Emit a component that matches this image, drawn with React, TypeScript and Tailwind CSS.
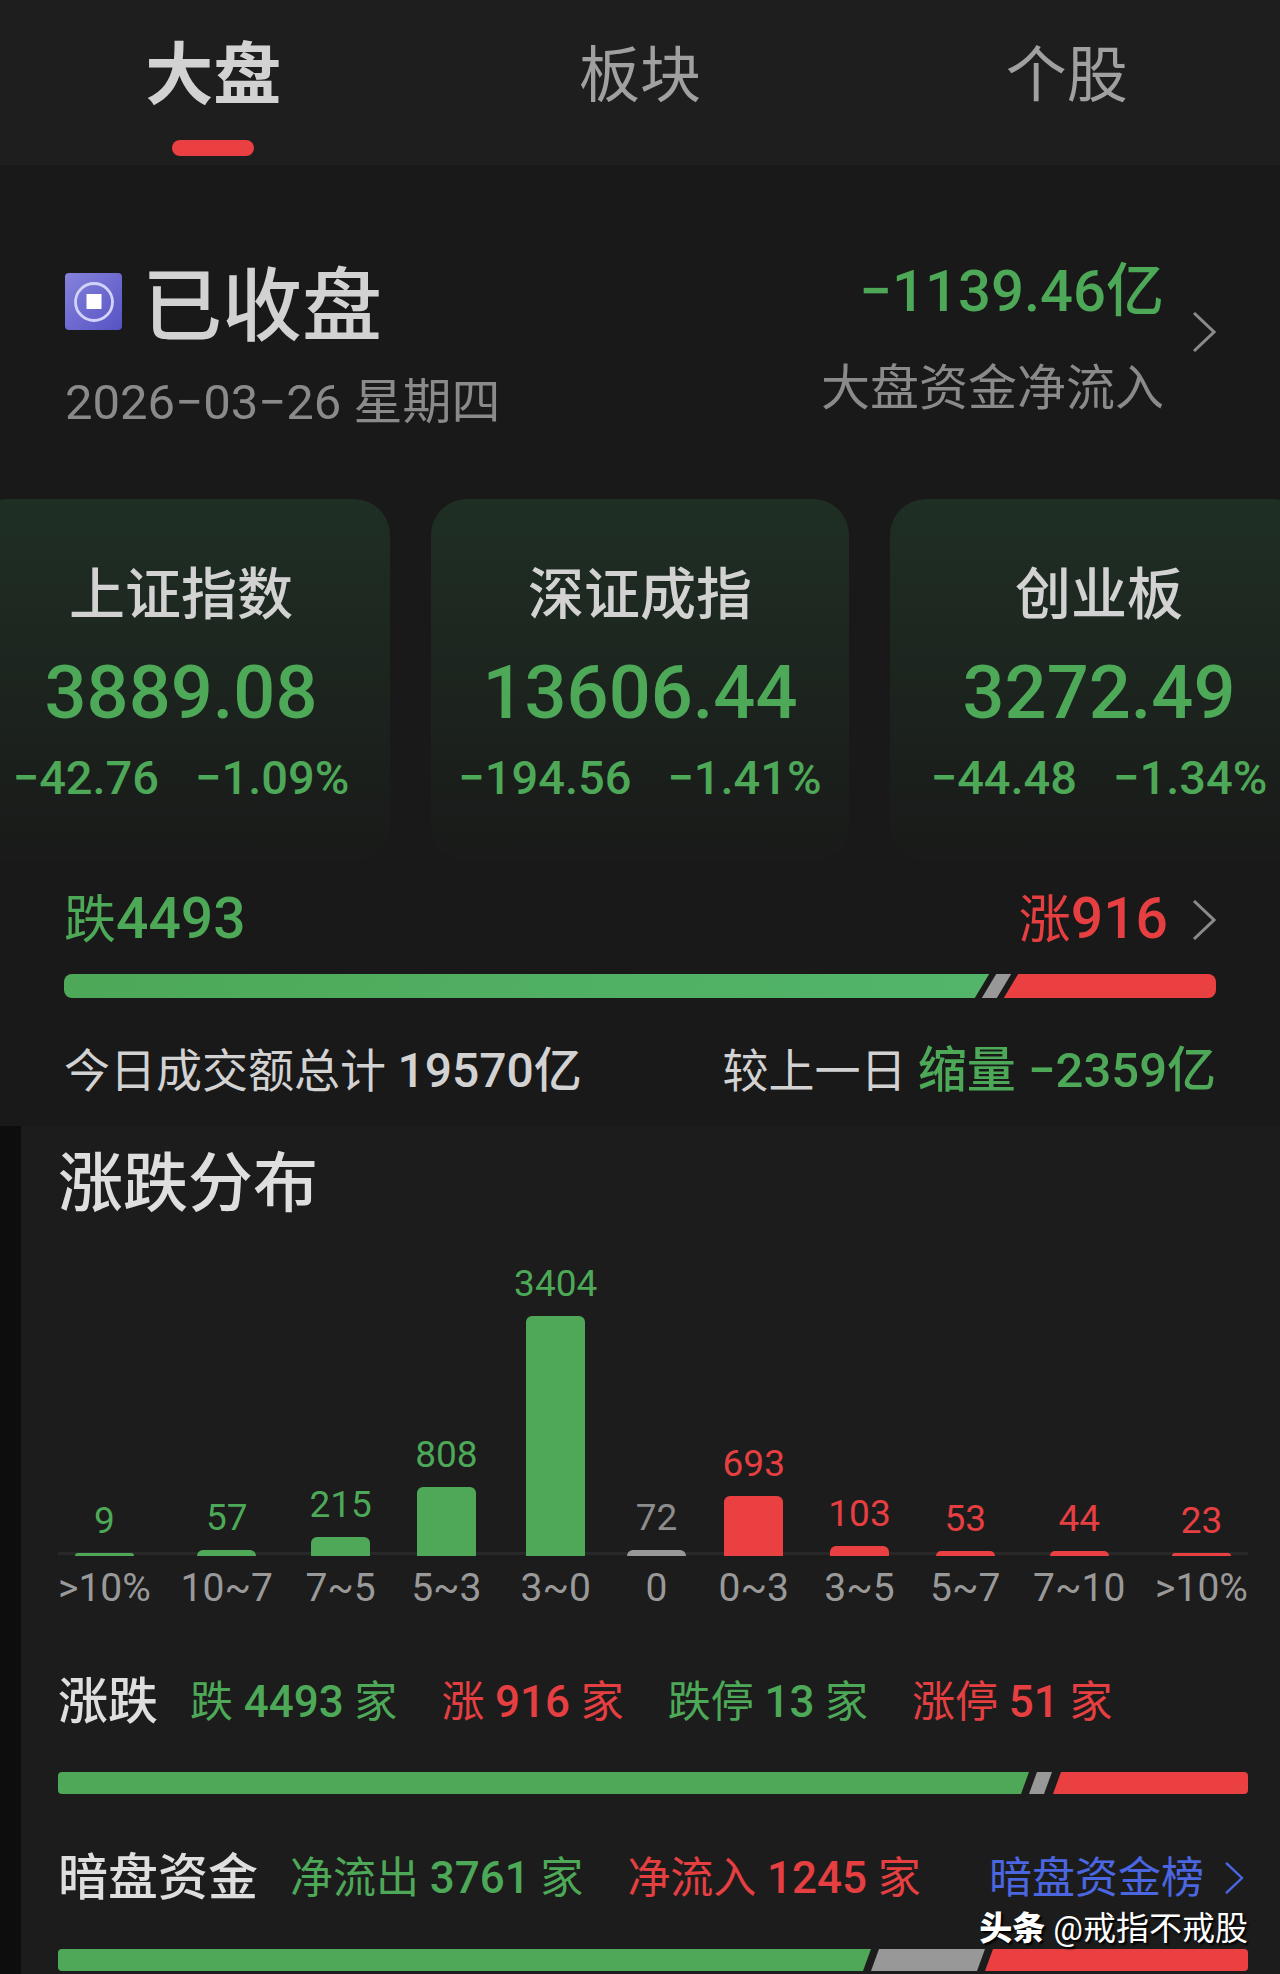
import { ReactNode } from 'react';

const GREEN = 'text-[#4da858]';
const RED = 'text-[#e63f41]';

const tabs = ['大盘', '板块', '个股'];

const indices = [
  { name: '上证指数', value: '3889.08', change: '−42.76', percent: '−1.09%' },
  { name: '深证成指', value: '13606.44', change: '−194.56', percent: '−1.41%' },
  { name: '创业板', value: '3272.49', change: '−44.48', percent: '−1.34%' },
];

const distribution = [
  { label: '>10%', count: 9, height: 3, tone: 'down' },
  { label: '10~7', count: 57, height: 6, tone: 'down' },
  { label: '7~5', count: 215, height: 19, tone: 'down' },
  { label: '5~3', count: 808, height: 69, tone: 'down' },
  { label: '3~0', count: 3404, height: 240, tone: 'down' },
  { label: '0', count: 72, height: 6, tone: 'flat' },
  { label: '0~3', count: 693, height: 60, tone: 'up' },
  { label: '3~5', count: 103, height: 10, tone: 'up' },
  { label: '5~7', count: 53, height: 5, tone: 'up' },
  { label: '7~10', count: 44, height: 5, tone: 'up' },
  { label: '>10%', count: 23, height: 3, tone: 'up' },
];

const textTone: Record<string, string> = {
  down: GREEN,
  flat: 'text-[#8c8c8c]',
  up: RED,
};

const barTone: Record<string, string> = {
  down: 'bg-[#4fa858]',
  flat: 'bg-[#989898]',
  up: 'bg-[#ea4041]',
};

function Chevron({ className }: { className: string }) {
  return (
    <svg viewBox="0 0 24 40" fill="none" stroke="currentColor" strokeWidth="3" className={className} aria-hidden="true">
      <path d="M2 1 L22 20 L2 39" />
    </svg>
  );
}

function CoinIcon() {
  return (
    <svg viewBox="0 0 57 57" className="mt-3.5 size-[57px] shrink-0" aria-hidden="true">
      <defs>
        <linearGradient id="coin" x1="0" y1="0" x2="1" y2="1">
          <stop offset="0" stopColor="#8583dc" />
          <stop offset="1" stopColor="#5752c4" />
        </linearGradient>
      </defs>
      <rect width="57" height="57" rx="4" fill="url(#coin)" />
      <circle cx="29" cy="29" r="18.5" fill="none" stroke="#d3d3fa" strokeWidth="2.8" />
      <rect x="21.5" y="21" width="15" height="15" fill="#fff" />
    </svg>
  );
}

// 跌 / 平 / 涨 比例条
function RatioBar({ down, flat, size }: { down: number; flat: number; size: 'lg' | 'md' }) {
  const lg = size === 'lg';
  const skew = lg ? '-skew-x-[31deg]' : '-skew-x-[20deg]';
  return (
    <div className={'flex overflow-hidden ' + (lg ? 'h-6 gap-[7px] rounded-lg' : 'h-[22px] gap-2 rounded-sm')}>
      <div style={{ width: `${down}%` }}>
        <div className={`h-full -ml-4 ${skew} ` + (lg ? 'bg-linear-to-r from-[#4da858] to-[#52b56a]' : 'bg-[#4fa858]')} />
      </div>
      <div className={`bg-[#989898] ${skew}`} style={{ width: `${flat}%` }} />
      <div className={`flex-1 -mr-4 bg-[#ea4041] ${skew}`} />
    </div>
  );
}

function Stat({ label, value, tone }: { label: string; value: string; tone: string }) {
  return (
    <span className={`text-[43px] ${tone}`}>
      {label} <span className="text-[44px] font-medium">{value}</span> 家
    </span>
  );
}

function StatRow({ title, children }: { title: string; children: ReactNode }) {
  return (
    <div className="flex items-center leading-[64px] whitespace-nowrap">
      <h3 className="mr-8 text-[50px] font-medium text-[#dedede]">{title}</h3>
      {children}
    </div>
  );
}

export default function App() {
  return (
    <div className="min-h-screen overflow-hidden bg-[#191919] font-[Roboto,'Noto_Sans_CJK_SC',sans-serif] text-[#d2d2d2]">
      <nav className="grid grid-cols-3 bg-[#1e1e1e] pt-9 pb-[9px]">
        {tabs.map((tab, i) => (
          <button key={tab} type="button" className="flex flex-col items-center">
            <span className={'leading-[80px] ' + (i === 0 ? 'text-[68px] font-bold' : 'text-[61px] text-[#a0a0a0]')}>
              {tab}
            </span>
            <span className={'mt-6 h-4 w-[82px] rounded-full ' + (i === 0 ? 'bg-[#ea4041]' : '')} />
          </button>
        ))}
      </nav>

      <section className="pb-[23px]">
        <div className="flex justify-between pt-[94px] pr-16 pl-[65px] whitespace-nowrap">
          <div>
            <div className="flex items-start gap-5">
              <CoinIcon />
              <h1 className="text-[80px] leading-24 font-medium">已收盘</h1>
            </div>
            <p className="mt-5 text-[49px] leading-14 text-[#8a8a8a]">2026−03−26 星期四</p>
          </div>
          <a href="#flow" className="flex items-start gap-7">
            <div className="text-right">
              <p className={`text-[58px] leading-16 font-medium ${GREEN}`}>−1139.46亿</p>
              <p className="mt-[38px] text-[49px] leading-14 text-[#8a8a8a]">大盘资金净流入</p>
            </div>
            <Chevron className="mt-[53px] h-10 w-6 text-[#8a8a8a]" />
          </a>
        </div>

        {/* 指数卡片 */}
        <div className="mt-[68px] flex justify-center gap-[41px] whitespace-nowrap">
          {indices.map((item) => (
            <div
              key={item.name}
              className="w-[418px] shrink-0 rounded-[36px] bg-linear-to-b from-[#1f2f24] to-[#191a19] pt-16 pb-[53px] text-center"
            >
              <h2 className="text-[56px] leading-16 font-medium">{item.name}</h2>
              <p className={`mt-5 text-[74px] leading-[92px] font-medium ${GREEN}`}>{item.value}</p>
              <p className={`mt-[9px] flex justify-center gap-9 text-[47px] leading-[60px] font-medium ${GREEN}`}>
                <span>{item.change}</span>
                <span>{item.percent}</span>
              </p>
            </div>
          ))}
        </div>

        <div className="mt-[26px] px-16">
          <div className="flex items-center justify-between leading-16 whitespace-nowrap">
            <p className={`text-[52px] ${GREEN}`}>
              跌<span className="text-[57px] font-medium">4493</span>
            </p>
            <a href="#rank" className="flex items-center gap-6">
              <span className={`text-[52px] ${RED}`}>
                涨<span className="text-[57px] font-medium">916</span>
              </span>
              <Chevron className="h-10 w-6 text-[#8a8a8a]" />
            </a>
          </div>
          <div className="mt-[21px]">
            <RatioBar down={79.7} flat={1.3} size="lg" />
          </div>
          <div className="mt-[41px] flex items-baseline justify-between text-[46px] leading-16 whitespace-nowrap">
            <p>
              今日成交额总计 <span className="text-[48px] font-medium">19570亿</span>
            </p>
            <p>
              较上一日 <span className={`text-[49px] font-medium ${GREEN}`}>缩量 −2359亿</span>
            </p>
          </div>
        </div>
      </section>

      <section className="border-l-[21px] border-[#0d0d0d] bg-[#1c1c1c] pt-[18px] pr-8 pb-1 pl-[37px]">
        <h2 className="text-[65px] leading-20 font-medium text-[#dedede]">涨跌分布</h2>

        {/* 涨跌分布柱状图 */}
        <div className="relative mt-9 flex items-end justify-between">
          <div className="absolute inset-x-0 bottom-[57px] h-[3px] bg-[#282828]" />
          {distribution.map((d, i) => (
            <div
              key={i}
              className={'relative flex flex-col items-center ' + (d.label.includes('~') ? 'min-w-[76px]' : '')}
            >
              <span className={`mb-2 text-[37px] leading-12 ${textTone[d.tone]}`}>{d.count}</span>
              <div
                className={`w-[59px] rounded-t-md ${barTone[d.tone]}`}
                style={{ height: d.height }}
              />
              <span className="mt-2 text-[39px] leading-12 text-[#999999]">{d.label}</span>
            </div>
          ))}
        </div>

        <div className="mt-[58px]">
          <StatRow title="涨跌">
            <div className="flex gap-11">
              <Stat label="跌" value="4493" tone={GREEN} />
              <Stat label="涨" value="916" tone={RED} />
              <Stat label="跌停" value="13" tone={GREEN} />
              <Stat label="涨停" value="51" tone={RED} />
            </div>
          </StatRow>
        </div>
        <div className="mt-[38px]">
          <RatioBar down={81.3} flat={1.3} size="md" />
        </div>

        <div className="mt-[52px]">
          <StatRow title="暗盘资金">
            <div className="flex gap-11">
              <Stat label="净流出" value="3761" tone={GREEN} />
              <Stat label="净流入" value="1245" tone={RED} />
            </div>
            <a href="#dark-rank" className="ml-auto flex items-center gap-5 pr-1 text-[43px] text-[#4a66e0]">
              暗盘资金榜
              <Chevron className="h-8 w-5" />
            </a>
          </StatRow>
        </div>
        <div className="relative mt-[39px]">
          <RatioBar down={68} flat={8.9} size="md" />
          <p className="absolute right-0 bottom-full text-[33px] leading-10 whitespace-nowrap text-white [text-shadow:2px_2px_2px_#000]">
            <span className="font-black">头条</span> @戒指不戒股
          </p>
        </div>
      </section>
    </div>
  );
}
